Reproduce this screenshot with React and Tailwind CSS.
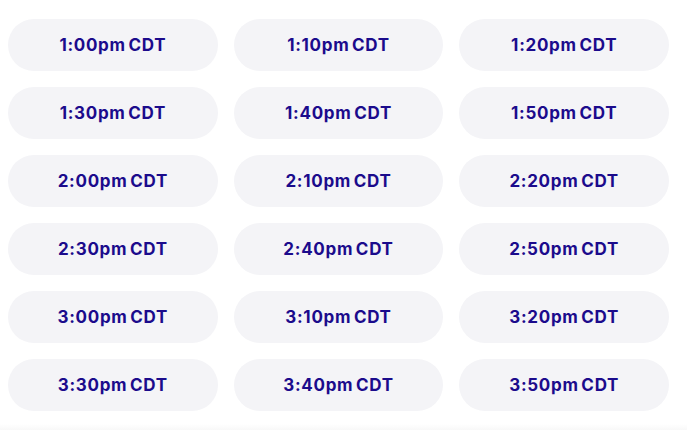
export default function App() {
  const times = [
    "1:00pm", "1:10pm", "1:20pm",
    "1:30pm", "1:40pm", "1:50pm",
    "2:00pm", "2:10pm", "2:20pm",
    "2:30pm", "2:40pm", "2:50pm",
    "3:00pm", "3:10pm", "3:20pm",
    "3:30pm", "3:40pm", "3:50pm",
  ];
  return (
    <div className="w-[687px] h-[430px] bg-white flex flex-col overflow-hidden" style={{ fontFamily: "Inter, 'Liberation Sans', sans-serif" }}>
      <div className="pt-[19px] pl-[8px] pr-[18px] grid grid-cols-3 gap-x-[16px] gap-y-[16px]">
        {times.map((t) => (
          <button
            key={t}
            className="h-[52px] pt-[2px] rounded-full bg-[#f4f4f7] text-[#1b0b8c] font-bold text-[17px] tracking-[0.7px] [word-spacing:-2px] flex items-center justify-center"
          >
            {t} CDT
          </button>
        ))}
      </div>
      <div className="mt-auto h-[6px] bg-gradient-to-b from-white to-[#f8f8f8]" />
    </div>
  );
}
